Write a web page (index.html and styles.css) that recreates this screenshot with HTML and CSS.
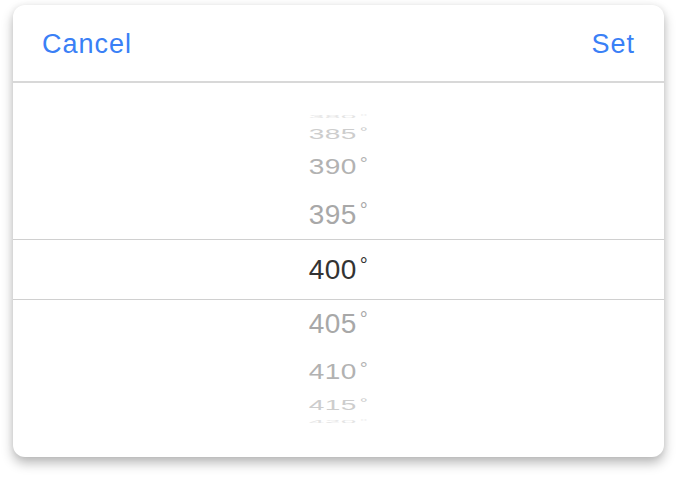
FILE: index.html
```html
<!DOCTYPE html>
<html lang="en">
<head>
    <meta charset="UTF-8">
    <meta name="viewport" content="width=device-width, initial-scale=1.0">
    <title>Temperature picker</title>
    <link rel="stylesheet" href="styles.css">
</head>
<body>
    <div class="picker-card">
        <header class="picker-header">
            <button class="picker-btn">Cancel</button>
            <button class="picker-btn">Set</button>
        </header>

        <!-- wheel: rows further from the selection get flatter and lighter -->
        <div class="wheel">
            <div class="wheel-row d4"><span>380<sup>°</sup></span></div>
            <div class="wheel-row d3"><span>385<sup>°</sup></span></div>
            <div class="wheel-row d2"><span>390<sup>°</sup></span></div>
            <div class="wheel-row d1"><span>395<sup>°</sup></span></div>
            <div class="wheel-row current"><span>400<sup>°</sup></span></div>
            <div class="wheel-row d1"><span>405<sup>°</sup></span></div>
            <div class="wheel-row d2"><span>410<sup>°</sup></span></div>
            <div class="wheel-row d3"><span>415<sup>°</sup></span></div>
            <div class="wheel-row d4"><span>420<sup>°</sup></span></div>
        </div>
    </div>
</body>
</html>
```

FILE: styles.css
```css
body {
    font-family: 'Liberation Sans', Arial, sans-serif;
    margin: 0;
    padding: 5px 12px 20px 13px;
    background: #fff;
}

.picker-card {
    width: 651px;
    background: #fff;
    border-radius: 12px;
    box-shadow: 0 6px 12px rgba(0, 0, 0, 0.28), 0 0 6px rgba(0, 0, 0, 0.06);
    overflow: hidden;
}

.picker-header {
    height: 74px;
    padding: 2px 29px 0;
    display: flex;
    justify-content: space-between;
    align-items: center;
    border-bottom: 2px solid #d8d8d8;
}

.picker-btn {
    background: none;
    border: none;
    padding: 0;
    font-family: inherit;
    font-size: 27px;
    letter-spacing: 1px;
    color: #3a80f6;
    cursor: pointer;
}

.wheel {
    padding: 26px 0 27px;
}

.wheel-row {
    display: flex;
    justify-content: center;
    align-items: center;
    font-size: 28px;
    letter-spacing: 0.5px;
    height: 48px;
    color: #a8a8a8;
}

.wheel-row span {
    display: inline-block;
}

.wheel-row sup {
    font-size: 20px;
    vertical-align: 7px;
    line-height: 0;
    margin-left: 3px;
}

.wheel-row.current {
    height: 59px;
    color: #333;
    border-top: 1px solid #d0d0d0;
    border-bottom: 1px solid #d0d0d0;
}

.wheel-row.d1 span {
    transform: scaleY(0.97);
}

.wheel-row.d2 {
    color: #b2b2b2;
}

.wheel-row.d2 span {
    transform: scaleY(0.82);
}

.wheel-row.d3 {
    height: 18px;
    color: #cdcdcd;
}

.wheel-row.d3 span {
    transform: scaleY(0.55);
}

.wheel-row.d4 {
    height: 16px;
    color: #e4e4e4;
}

.wheel-row.d4 span {
    transform: scaleY(0.14);
}
```
